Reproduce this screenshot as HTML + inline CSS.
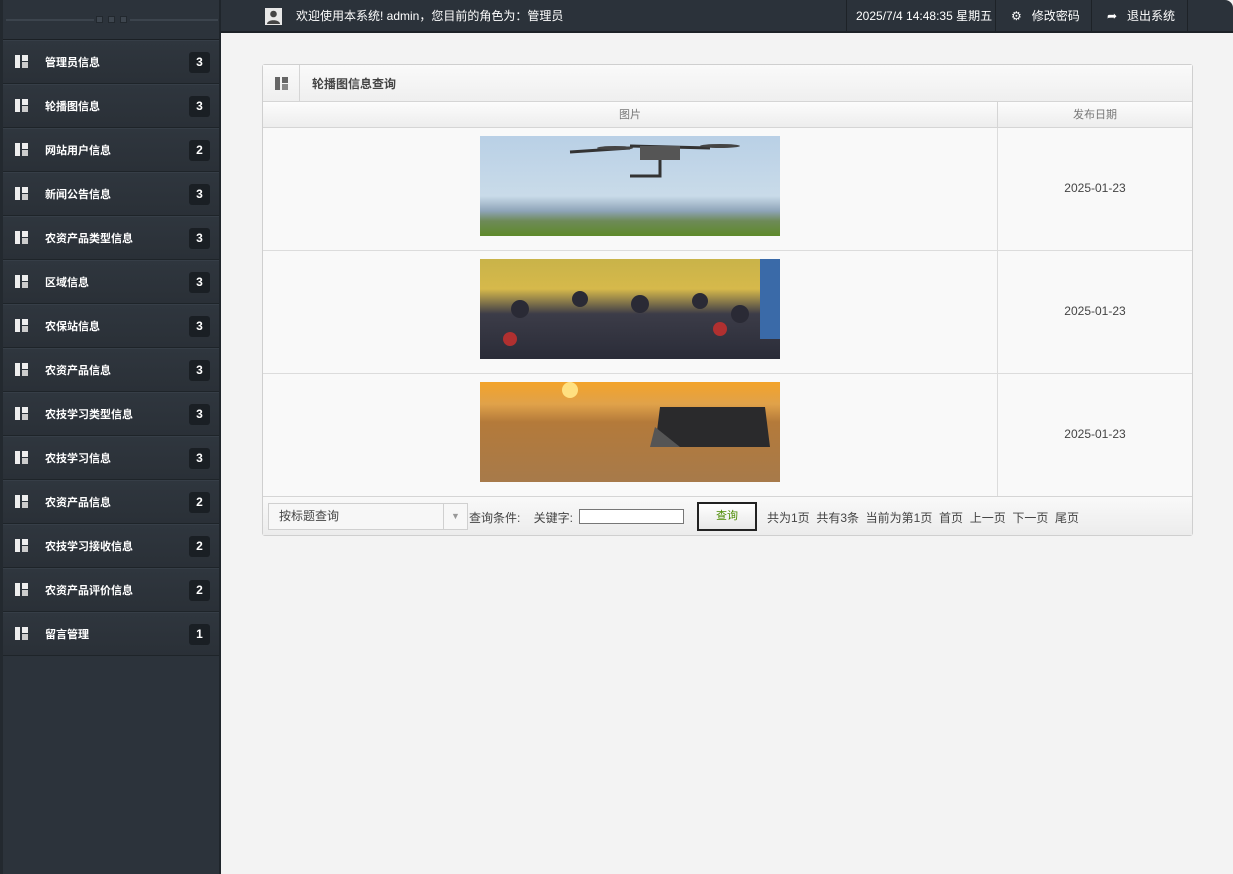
<!DOCTYPE html>
<html><head><meta charset="utf-8"><style>
*{box-sizing:border-box;margin:0;padding:0}
body{width:1233px;height:874px;background:#f3f3f3;font-family:"Liberation Sans","Noto Sans CJK SC",sans-serif;font-size:12px;position:relative;overflow:hidden}
.side{position:absolute;left:0;top:0;width:221px;height:874px;background:#2c333b;border-right:2px solid #1f252b;border-left:3px solid #23292f}
.shead{height:40px;border-bottom:1px solid #1b2025;position:relative}
.shead .l{position:absolute;top:19px;height:2px;background:#3c444d;width:88px}
.shead .d{position:absolute;top:16px;width:7px;height:7px;background:#3e464f;border:1px solid #22282e}
.item{height:44px;border-bottom:1px solid #1e2429;border-top:1px solid #363e47;position:relative;color:#fff;font-weight:bold;font-size:11px;background:linear-gradient(#2f363e,#2a3037)}
.item .ic{position:absolute;left:12px;top:14px;width:13px;height:13px}
.item .t{position:absolute;left:42px;top:13px}
.item .b{position:absolute;left:186px;top:11px;width:21px;height:21px;background:#1a1f24;border-radius:3px;text-align:center;line-height:21px;font-size:12px}
.top{position:absolute;left:221px;top:0;width:1012px;height:33px;background:#2b323a;border-bottom:2px solid #1d2227;color:#fff;border-top-right-radius:8px;font-size:12px}
.top .s{position:absolute;top:0;height:31px;line-height:33px;border-left:1px solid #1d2227}
.panel{position:absolute;left:262px;top:64px;width:931px;height:472px;border:1px solid #cfcfcf;border-radius:3px;background:#f9f9f9}
.ph{height:37px;border-bottom:1px solid #d5d5d5;background:linear-gradient(#fafafa,#efefef);position:relative;font-weight:bold;color:#444}
.th{position:absolute;top:37px;height:26px;line-height:26px;text-align:center;color:#777;font-size:11px;background:linear-gradient(#fcfcfc,#ededed);border-bottom:1px solid #d5d5d5}
.row{position:absolute;left:0;width:929px;height:123px;border-bottom:1px solid #dcdcdc}
.row .d{position:absolute;left:734px;top:0;width:195px;height:100%;border-left:1px solid #dcdcdc;text-align:center;line-height:120px;color:#444}
.img{position:absolute;left:217px;top:8px;width:300px;height:100px}
.foot{position:absolute;top:431px;left:0;width:929px;height:39px;background:linear-gradient(#f9f9f9,#ececec);color:#444;border-top:1px solid #d5d5d5}
</style></head><body>
<div class="side">
<div class="shead"><div class="l" style="left:3px"></div><div class="l" style="left:127px"></div>
<div class="d" style="left:93px"></div><div class="d" style="left:105px"></div><div class="d" style="left:117px"></div></div>
<div id="items"></div>
</div>
<div class="top">
<div style="position:absolute;left:44px;top:8px;width:17px;height:17px;background:#e8e8e8"><svg width="17" height="17"><circle cx="8.5" cy="6" r="3.3" fill="#444"/><path d="M2 16c0-5 13-5 13 0z" fill="#444"/></svg></div>
<div style="position:absolute;left:75px;top:0;line-height:33px">欢迎使用本系统! admin，您目前的角色为：管理员</div>
<div class="s" style="left:625px;width:150px;padding-left:9px">2025/7/4 14:48:35 星期五</div>
<div class="s" style="left:774px;width:97px;padding-left:15px">⚙ &nbsp;&nbsp;修改密码</div>
<div class="s" style="left:870px;width:97px;padding-left:15px">➦ &nbsp;&nbsp;退出系统</div>
<div class="s" style="left:966px;width:1px"></div>
</div>
<div class="panel">
<div class="ph"><svg style="position:absolute;left:12px;top:12px" width="13" height="13"><rect x="0" y="0" width="5" height="13" fill="#666"/><rect x="7" y="0" width="6" height="6" fill="#666"/><rect x="7" y="7" width="6" height="6" fill="#888"/></svg>
<div style="position:absolute;left:36px;top:0;height:36px;border-left:1px solid #d5d5d5"></div>
<div style="position:absolute;left:49px;top:10px">轮播图信息查询</div></div>
<div class="th" style="left:0;width:734px">图片</div>
<div class="th" style="left:734px;width:195px;border-left:1px solid #d5d5d5">发布日期</div>
<div class="row" style="top:63px"><div class="img" style="background:linear-gradient(#b9d0e6 0%,#c9dbe9 60%,#8ea4b8 75%,#6e8a58 85%,#5f8a2a 100%)"><svg width="300" height="60"><g stroke="#333" stroke-width="3" fill="none"><path d="M150 10 L230 12 M150 12 L90 16 M180 14 L180 40 L150 40"/></g><rect x="160" y="10" width="40" height="14" fill="#555"/><ellipse cx="135" cy="12" rx="18" ry="2" fill="#444"/><ellipse cx="240" cy="10" rx="20" ry="2" fill="#444"/></svg></div><div class="d">2025-01-23</div></div>
<div class="row" style="top:186px"><div class="img" style="background:linear-gradient(#c9b349 0%,#d6b94b 30%,#3c3c48 55%,#2a2c38 100%)"><svg width="300" height="100"><rect x="280" y="0" width="20" height="80" fill="#3a6aa8"/><g fill="#2a2a35"><circle cx="40" cy="50" r="9"/><circle cx="100" cy="40" r="8"/><circle cx="160" cy="45" r="9"/><circle cx="220" cy="42" r="8"/><circle cx="260" cy="55" r="9"/></g><g fill="#b03030"><circle cx="30" cy="80" r="7"/><circle cx="240" cy="70" r="7"/></g></svg></div><div class="d">2025-01-23</div></div>
<div class="row" style="top:309px"><div class="img" style="background:linear-gradient(#f3a32a 0%,#e0a24a 22%,#b47a3a 40%,#a77a4a 100%)"><svg width="300" height="100"><circle cx="90" cy="8" r="8" fill="#ffe080"/><path d="M180 25 L285 25 L290 65 L175 65 Z" fill="#2a2a2c"/><path d="M175 45 L200 65 L170 65Z" fill="#555"/></svg></div><div class="d">2025-01-23</div></div>
<div class="foot">
<div style="position:absolute;left:5px;top:6px;width:200px;height:27px;border:1px solid #d0d0d0;background:#f7f7f7;line-height:25px;padding-left:10px">按标题查询<div style="position:absolute;right:0;top:0;width:24px;height:25px;border-left:1px solid #d0d0d0;color:#999;text-align:center;font-size:9px">▼</div></div>
<div style="position:absolute;left:206px;top:12px">查询条件: &nbsp;&nbsp;&nbsp;关键字:</div>
<div style="position:absolute;left:316px;top:12px;width:105px;height:15px;border:1px solid #777;background:#fff"></div>
<div style="position:absolute;left:434px;top:5px;width:60px;height:29px;border:2px solid #222;background:linear-gradient(#fff,#e8e8e8);color:#4a8a00;text-align:center;line-height:25px;font-size:11px">查询</div>
<div style="position:absolute;left:504px;top:12px">共为1页 &nbsp;共有3条 &nbsp;当前为第1页 &nbsp;首页 &nbsp;上一页 &nbsp;下一页 &nbsp;尾页</div>
</div>
</div>
<script>
var n=[["管理员信息",3],["轮播图信息",3],["网站用户信息",2],["新闻公告信息",3],["农资产品类型信息",3],["区域信息",3],["农保站信息",3],["农资产品信息",3],["农技学习类型信息",3],["农技学习信息",3],["农资产品信息",2],["农技学习接收信息",2],["农资产品评价信息",2],["留言管理",1]];
var h="";n.forEach(function(x){h+='<div class="item"><svg class="ic" width="13" height="13"><rect width="5" height="13" fill="#eee"/><rect x="7" width="6" height="6" fill="#eee"/><rect x="7" y="7" width="6" height="6" fill="#ccc"/></svg><span class="t">'+x[0]+'</span><span class="b">'+x[1]+'</span></div>'});
document.getElementById("items").innerHTML=h;
</script>
</body></html>
